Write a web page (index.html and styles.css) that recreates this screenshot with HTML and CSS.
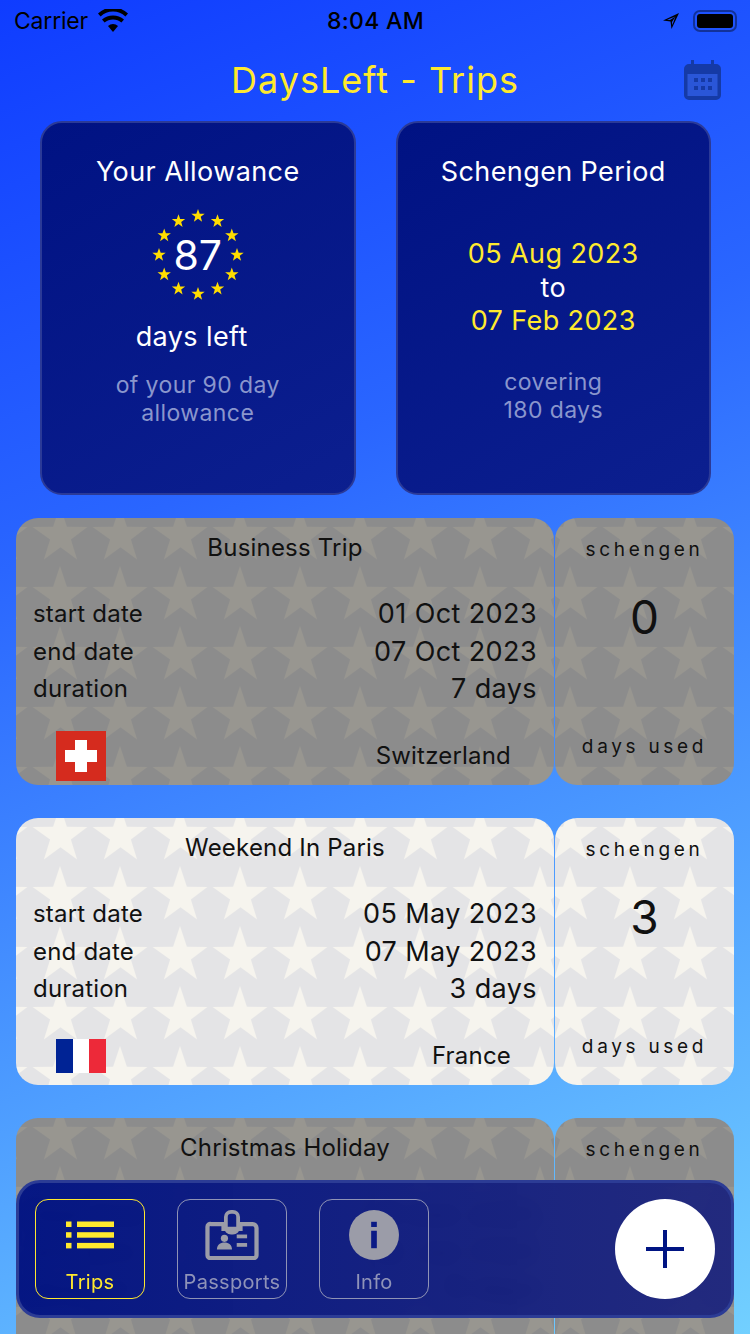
FILE: index.html
```html
<!DOCTYPE html>
<html>
<head>
    <title>DaysLeft - Trips</title>
    <link rel="stylesheet" href="styles.css">
</head>
<body>
<div class="screen">
    <div class="status">
        <div class="status-left">
            <span>Carrier</span>
            <svg class="wifi" viewBox="0 0 32 24" width="32" height="24">
                <path d="M16 23l-5-6a7.5 7.5 0 0 1 10 0z"/>
                <path d="M7.6 13.6a12.6 12.6 0 0 1 16.8 0l2.6-3a16.6 16.6 0 0 0-22 0z"/>
                <path d="M1 7a21.5 21.5 0 0 1 30 0l-2.6 3A18 18 0 0 0 3.600 10z" transform="translate(0 -2.500)"/>
            </svg>
        </div>
        <div class="status-time">8:04 AM</div>
        <div class="status-right">
            <svg viewBox="0 0 20 20" width="20" height="20"><path d="M18 2L2 9.500l7.500 1 1 7.500zM14.500 5.500L9 9 6 8.800zM11 11l3.500-5.500L11.300 14z" fill-rule="evenodd"/></svg>
            <div class="battery"><div class="battery-fill"></div></div>
        </div>
    </div>

    <div class="header">
        <h1>DaysLeft - Trips</h1>
        <svg class="cal" viewBox="0 0 37 40" width="37" height="40">
            <path d="M7 0h3v4h17V0h3v4h2a5 5 0 0 1 5 5v26a5 5 0 0 1-5 5H5a5 5 0 0 1-5-5V9a5 5 0 0 1 5-5h2z" fill="#153aa6"/>
            <rect x="3.500" y="14" width="30" height="22" fill="#2a56d8"/>
            <g fill="#153aa6">
                <rect x="10" y="18" width="4" height="4"/><rect x="17" y="18" width="4" height="4"/><rect x="24" y="18" width="4" height="4"/>
                <rect x="10" y="26" width="4" height="4"/><rect x="17" y="26" width="4" height="4"/><rect x="24" y="26" width="4" height="4"/>
            </g>
        </svg>
    </div>

    <div class="panels">
        <div class="panel">
            <div class="panel-title">Your Allowance</div>
            <div class="eu">
                <svg class="eu-stars" viewBox="-50 -50 100 100" width="100" height="100">
                    <defs><polygon id="s" points="0,-7 1.700,-2.200 6.700,-2.200 2.700,0.800 4.100,5.700 0,2.800 -4.100,5.700 -2.700,0.800 -6.700,-2.200 -1.700,-2.200"/></defs>
                    <g fill="#ffdd00">
                        <use href="#s" y="-39"/><use href="#s" x="19.500" y="-33.800"/><use href="#s" x="33.800" y="-19.500"/>
                        <use href="#s" x="39"/><use href="#s" x="33.800" y="19.500"/><use href="#s" x="19.500" y="33.800"/>
                        <use href="#s" y="39"/><use href="#s" x="-19.500" y="33.800"/><use href="#s" x="-33.800" y="19.500"/>
                        <use href="#s" x="-39"/><use href="#s" x="-33.800" y="-19.500"/><use href="#s" x="-19.500" y="-33.800"/>
                    </g>
                </svg>
                <span class="eu-num">87</span>
            </div>
            <div class="days-left">days left</div>
            <div class="panel-note">of your 90 day<br>allowance</div>
        </div>
        <div class="panel">
            <div class="panel-title">Schengen Period</div>
            <div class="period">
                <span class="yellow">05 Aug 2023</span>
                <span>to</span>
                <span class="yellow">07 Feb 2023</span>
            </div>
            <div class="panel-note">covering<br>180 days</div>
        </div>
    </div>

    <div class="trips">
        <div class="trip dark">
            <div class="trip-main">
                <div class="trip-title">Business Trip</div>
                <div class="rows">
                    <span>start date</span><b>01 Oct 2023</b>
                    <span>end date</span><b>07 Oct 2023</b>
                    <span>duration</span><b>7 days</b>
                </div>
                <div class="trip-foot">
                    <svg class="flag" viewBox="0 0 50 50" width="50" height="50">
                        <rect width="50" height="50" fill="#d52b1e"/>
                        <path d="M19 9h12v10h10v12H31v10H19V31H9V19h10z" fill="#fff"/>
                    </svg>
                    <span class="country">Switzerland</span>
                </div>
            </div>
            <div class="trip-side">
                <div class="side-label">schengen</div>
                <div class="side-num">0</div>
                <div class="side-label">days used</div>
            </div>
        </div>

        <div class="trip light">
            <div class="trip-main">
                <div class="trip-title">Weekend In Paris</div>
                <div class="rows">
                    <span>start date</span><b>05 May 2023</b>
                    <span>end date</span><b>07 May 2023</b>
                    <span>duration</span><b>3 days</b>
                </div>
                <div class="trip-foot">
                    <svg class="flag" viewBox="0 0 50 34" width="50" height="34">
                        <rect width="17" height="34" fill="#002395"/>
                        <rect x="17" width="16" height="34" fill="#fff"/>
                        <rect x="33" width="17" height="34" fill="#ed2939"/>
                    </svg>
                    <span class="country">France</span>
                </div>
            </div>
            <div class="trip-side">
                <div class="side-label">schengen</div>
                <div class="side-num">3</div>
                <div class="side-label">days used</div>
            </div>
        </div>

        <div class="trip dark">
            <div class="trip-main">
                <div class="trip-title">Christmas Holiday</div>
                <div class="rows">
                    <span>start date</span><b>23 Dec 2023</b>
                    <span>end date</span><b>02 Jan 2024</b>
                    <span>duration</span><b>11 days</b>
                </div>
            </div>
            <div class="trip-side">
                <div class="side-label">schengen</div>
            </div>
        </div>
    </div>

    <div class="tabbar">
        <div class="tab on">
            <svg viewBox="0 0 48 27" width="48" height="27" fill="#ffe92e">
                <rect y="0" width="5.500" height="5.500"/><rect x="11" y="0" width="37" height="5.500"/>
                <rect y="10.700" width="5.500" height="5.500"/><rect x="11" y="10.700" width="37" height="5.500"/>
                <rect y="21.400" width="5.500" height="5.500"/><rect x="11" y="21.400" width="37" height="5.500"/>
            </svg>
            <span>Trips</span>
        </div>
        <div class="tab">
            <svg viewBox="0 0 54 53" width="54" height="53">
                <path d="M5 16h13v5h18v-5h13a4 4 0 0 1 4 4v29a3 3 0 0 1-3 3H4a3 3 0 0 1-3-3V19a3 3 0 0 1 4-3z" fill="none" stroke="#9b9ca8" stroke-width="4.500" transform="translate(0 -1)"/>
                <rect x="20.500" y="2" width="13" height="22" rx="5.500" fill="none" stroke="#9b9ca8" stroke-width="4"/>
                <circle cx="19" cy="30" r="3.800" fill="#9b9ca8"/>
                <path d="M11 42c0-5 3.500-7.500 8-7.500s8 2.500 8 7.500z" fill="#9b9ca8"/>
                <rect x="32" y="26" width="11" height="4" fill="#9b9ca8"/>
                <rect x="32" y="35" width="11" height="4" fill="#9b9ca8"/>
            </svg>
            <span>Passports</span>
        </div>
        <div class="tab">
            <svg viewBox="0 0 54 53" width="54" height="53">
                <circle cx="27" cy="26.500" r="26.500" fill="#9b9ca8"/>
                <rect x="24" y="12.500" width="6" height="5.500" fill="#0a1a85"/>
                <rect x="24" y="22" width="6" height="18.500" fill="#0a1a85"/>
            </svg>
            <span>Info</span>
        </div>
        <div class="add">
            <svg viewBox="0 0 38 38" width="38" height="38">
                <path d="M17 0h4v17h17v4H21v17h-4V21H0v-4h17z" fill="#001483"/>
            </svg>
        </div>
    </div>
</div>
</body>
</html>
```

FILE: styles.css
```css
*{margin: 0; padding: 0; box-sizing: border-box;}
html,body{width: 750px; height: 1334px; overflow: hidden;}
body{font-family: Inter, "Liberation Sans", sans-serif;}

.screen{width: 750px; height: 1334px; overflow: hidden; position: relative;
    background: linear-gradient(158deg, #0f3cff 0%, #2a66ff 35%, #4a98ff 65%, #72d0ff 100%);}

/* status bar */
.status{height: 41px; display: flex; align-items: center; justify-content: space-between; padding: 0 13px 0 14px;
    position: relative; font-size: 23px; color: #000;}
.status-left{display: flex; align-items: center; gap: 9px; width: 200px;}
.status-left span{letter-spacing: -0.2px;}
.wifi{fill: #000;}
.status-time{font-weight: 500; letter-spacing: 0.3px;}
.status-right{display: flex; align-items: center; justify-content: flex-end; gap: 12px; width: 200px;}
.battery{width: 44px; height: 22px; border: 2px solid rgba(0,0,0,.4); border-radius: 7px; padding: 2px;}
.battery-fill{height: 100%; background: #000; border-radius: 3px;}

/* title */
.header{height: 80px; display: flex; align-items: center; justify-content: center; position: relative; padding-bottom: 2px;}
.header h1{font-size: 36px; font-weight: 400; color: #ffe92e; letter-spacing: 1px;}
.cal{position: absolute; right: 29px; top: 19px;}

/* top panels */
.panels{display: flex; gap: 40px; padding: 0 39px 0 40px;}
.panel{flex: 1; height: 374px; border: 2px solid #2b3a97; border-radius: 22px; padding-top: 31px;
    background: linear-gradient(150deg, #001283, #0c1f8f);
    display: flex; flex-direction: column; align-items: center; color: #fff; font-size: 27px;}
.panel-title{line-height: 36px; letter-spacing: 0.4px;}
.eu{width: 100px; height: 100px; margin-top: 15px; display: flex; align-items: center; justify-content: center; position: relative;}
.eu-stars{position: absolute; left: 0; top: 0;}
.eu-num{font-size: 41px; position: relative;}
.days-left{line-height: 36px; margin-top: 14px; margin-right: 12px; letter-spacing: 0.4px;}
.panel-note{margin-top: 16px; font-size: 23px; line-height: 28px; color: #8a96cd; text-align: center; letter-spacing: 0.4px;}
.period{display: flex; flex-direction: column; align-items: center; margin-top: 47px; line-height: 33.500px; letter-spacing: 0.4px; margin-bottom: 14px;}
.yellow{color: #ffe92e;}

/* trips */
.trips{display: flex; flex-direction: column; gap: 33px; padding: 23px 16px 0;}
.trip{display: flex; gap: 1px; height: 267px; flex: none; color: #111;}
.trip-main,.trip-side{border-radius: 22px; background-repeat: repeat; background-size: 60px 60px;}
.trip-main{width: 538px; padding: 0 17px; background-position: 14px -17px;}
.trip-side{width: 179px; background-position: -15px -17px; display: flex; flex-direction: column; align-items: center;}
.dark .trip-main,.dark .trip-side{background-color: #8c8c8c;
    background-image: url("data:image/svg+xml,%3Csvg xmlns='http://www.w3.org/2000/svg' width='60' height='60'%3E%3Cpath fill='%23989690' d='M30 5l6.900 20.700 20.500.3-16.500 12.600 6.200 20-16.600-12.300-16.600 12.300 6.200-20L2.600 26l20.500-.3z'/%3E%3C/svg%3E");}
.light .trip-main,.light .trip-side{background-color: #e4e4e6;
    background-image: url("data:image/svg+xml,%3Csvg xmlns='http://www.w3.org/2000/svg' width='60' height='60'%3E%3Cpath fill='%23f6f4ee' d='M30 5l6.900 20.700 20.500.3-16.500 12.600 6.200 20-16.600-12.300-16.600 12.300 6.200-20L2.600 26l20.500-.3z'/%3E%3C/svg%3E");}
.trip-title{height: 60px; line-height: 60px; text-align: center; font-size: 24px; letter-spacing: 0.2px;}
.rows{display: grid; grid-template-columns: auto 1fr; grid-auto-rows: 37.500px; align-items: center; margin-top: 17px; font-size: 24px;}
.rows span{letter-spacing: 0.2px;}
.rows b{font-weight: 400; font-size: 27px; text-align: right; letter-spacing: 0.4px;}
.trip-foot{display: flex; align-items: center; height: 50px; margin-top: 23px; padding: 0 26px 0 23px; font-size: 24px;}
.flag{display: block;}
.country{margin-left: auto; letter-spacing: 0.2px;}
.side-label{font-size: 19px; letter-spacing: 3.700px; line-height: 24px; margin-top: 20px;}
.side-num{font-size: 46px; height: 166px; padding-top: 27px; margin-top: 0;}
.side-num + .side-label{margin-top: 7px;}

/* bottom bar lies over the list */
.tabbar{position: absolute; left: 16px; top: 1180px; width: 718px; height: 138px; border: 3px solid #2c3c95; border-radius: 24px;
    display: flex; align-items: center; gap: 32px; padding: 0 16px;
    background: linear-gradient(90deg, rgba(0,18,131,.96), rgba(28,36,125,.94)); backdrop-filter: blur(8px);}
.tab{width: 110px; height: 100px; border: 1px solid #8f93b5; border-radius: 13px; display: flex; flex-direction: column; align-items: center;
    color: #8f93b8; font-size: 20px; padding-top: 10px; letter-spacing: 0.3px;}
.tab svg{height: 53px; display: block;}
.tab span{margin-top: 6px; line-height: 32px;}
.tab.on{border-color: #ffe92e; color: #ffe92e;}
.add{width: 100px; height: 100px; border-radius: 50%; background: #fff; margin-left: auto; display: flex; align-items: center; justify-content: center;}
```
